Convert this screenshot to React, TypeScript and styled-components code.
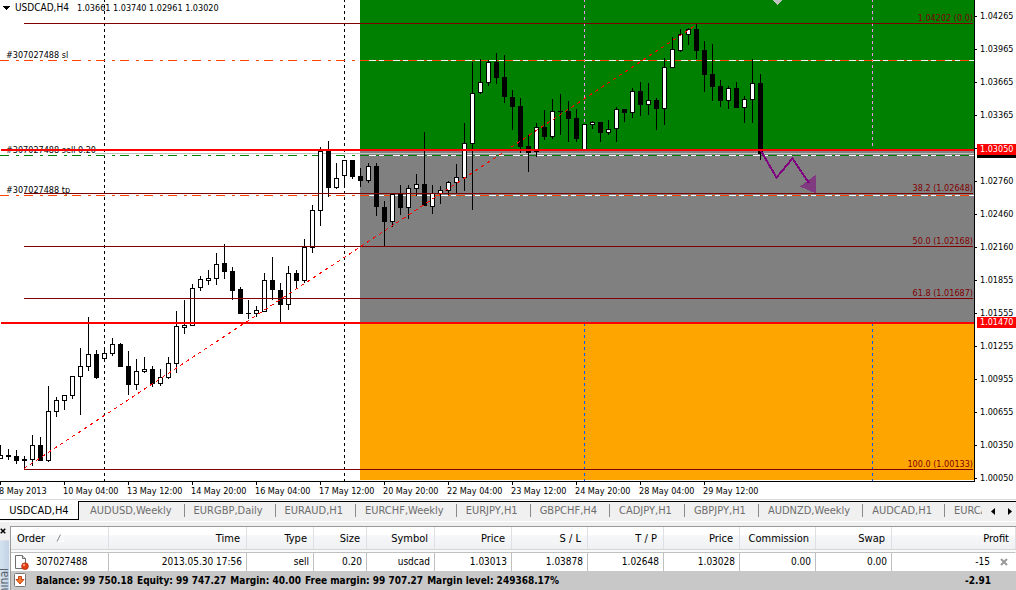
import React from "react";
import styled, { createGlobalStyle } from "styled-components";

const FONT = `"DejaVu Sans Condensed", "DejaVu Sans", "Liberation Sans", sans-serif`;

const GlobalStyle = createGlobalStyle`
  * { box-sizing: border-box; }
  html, body { margin: 0; padding: 0; height: 100%; overflow: hidden; }
  body { background: #f0f0f0; font-family: ${FONT}; color: #000; }
  #root { height: 100%; }
  ul { margin: 0; padding: 0; list-style: none; }
  button { font: inherit; padding: 0; border: 0; background: none; cursor: pointer; }
`;

/* ---------- chart data ---------- */

// [x, wick top, wick bottom, body top, body bottom, rising]
type Candle = [number, number, number, number, number, 0 | 1];

const candles: Candle[] = [
  [0, 445, 459, 455, 459, 1], [8, 449, 460, 455, 457, 0], [16, 450, 464, 456, 461, 0],
  [24, 456, 469, 459, 461, 0], [32, 435, 466, 445, 460, 1], [40, 437, 461, 445, 461, 0],
  [48, 386, 462, 411, 461, 1], [56, 397, 417, 400, 412, 1], [64, 395, 410, 395, 401, 1],
  [72, 376, 399, 376, 396, 1], [80, 348, 415, 366, 377, 1], [88, 317, 371, 354, 367, 1],
  [96, 350, 379, 354, 378, 0], [104, 349, 359, 353, 359, 1], [112, 338, 356, 344, 354, 1],
  [120, 343, 367, 344, 367, 0], [128, 351, 395, 366, 385, 0], [136, 359, 390, 371, 385, 1],
  [144, 357, 373, 369, 372, 1], [152, 366, 387, 369, 384, 0], [160, 369, 386, 377, 384, 1],
  [168, 357, 379, 363, 378, 1], [176, 311, 373, 326, 364, 1], [184, 300, 334, 325, 328, 1],
  [192, 284, 326, 288, 326, 1], [200, 276, 291, 279, 288, 1], [208, 270, 285, 278, 281, 1],
  [216, 253, 285, 264, 279, 1], [224, 244, 279, 263, 272, 0], [232, 267, 300, 271, 291, 0],
  [240, 287, 314, 289, 314, 0], [248, 300, 319, 313, 314, 0], [256, 306, 317, 310, 314, 1],
  [264, 273, 312, 280, 312, 1], [272, 257, 300, 280, 290, 0], [280, 283, 323, 290, 305, 0],
  [288, 266, 310, 273, 305, 1], [296, 270, 289, 273, 281, 0], [304, 239, 283, 247, 281, 1],
  [312, 205, 253, 210, 248, 1], [320, 147, 226, 151, 211, 1], [328, 141, 197, 150, 188, 0],
  [336, 163, 189, 178, 188, 1], [344, 160, 186, 160, 176, 1], [352, 160, 179, 160, 177, 0],
  [360, 168, 187, 176, 181, 0], [368, 163, 183, 166, 181, 1], [376, 163, 216, 166, 207, 0],
  [384, 201, 246, 207, 222, 0], [392, 194, 227, 194, 222, 1], [400, 185, 215, 194, 208, 0],
  [408, 185, 219, 188, 208, 1], [416, 174, 196, 184, 189, 1], [424, 132, 206, 184, 206, 0],
  [432, 185, 214, 193, 207, 1], [440, 186, 204, 190, 194, 1], [448, 181, 195, 182, 191, 1],
  [456, 164, 193, 177, 183, 1], [464, 123, 191, 143, 178, 1], [472, 62, 210, 93, 144, 1],
  [480, 59, 94, 82, 93, 1], [488, 60, 86, 62, 83, 1], [496, 53, 84, 62, 78, 0],
  [504, 55, 103, 77, 97, 0], [512, 90, 130, 97, 107, 0], [520, 98, 153, 106, 147, 0],
  [528, 135, 172, 146, 153, 0], [536, 123, 157, 127, 152, 1], [544, 110, 140, 127, 137, 0],
  [552, 99, 139, 111, 137, 1], [560, 94, 135, 111, 112, 0], [568, 101, 142, 111, 119, 0],
  [576, 109, 142, 118, 139, 0], [584, 124, 150, 124, 150, 1], [592, 121, 129, 122, 125, 1],
  [600, 122, 142, 122, 133, 0], [608, 120, 135, 129, 133, 1], [616, 107, 142, 109, 129, 1],
  [624, 109, 122, 109, 113, 0], [632, 88, 118, 91, 113, 1], [640, 82, 116, 91, 105, 0],
  [648, 83, 115, 100, 105, 1], [656, 98, 130, 100, 109, 0], [664, 58, 125, 67, 109, 1],
  [672, 37, 68, 49, 68, 1], [680, 29, 52, 34, 51, 1], [688, 28, 45, 29, 35, 1],
  [696, 24, 59, 29, 51, 0], [704, 41, 92, 50, 75, 0], [712, 44, 101, 74, 87, 0],
  [720, 80, 107, 86, 101, 0], [728, 86, 109, 88, 101, 1], [736, 82, 108, 88, 108, 0],
  [744, 96, 123, 99, 108, 1], [752, 59, 123, 83, 100, 1], [760, 74, 160, 83, 154, 0],
];

const fibs = [
  { y: 23, label: "1.04202 (0.0)" },
  { y: 193, label: "38.2 (1.02648)" },
  { y: 246, label: "50.0 (1.02168)" },
  { y: 298, label: "61.8 (1.01687)" },
  { y: 469, label: "100.0 (1.00133)" },
];

const orders = [
  { y: 60, color: "#ff4500", label: "#307027488 sl", base: 58 },
  { y: 155, color: "#008000", label: "#307027488 sell 0.20", base: 153 },
  { y: 195, color: "#ff4500", label: "#307027488 tp", base: 193 },
];

const prices = [
  "1.04265", "1.03965", "1.03665", "1.03365", "", "1.02760", "1.02460", "1.02160",
  "1.01855", "1.01555", "1.01255", "1.00955", "1.00655", "1.00350", "1.00050",
];

const dates = [
  "8 May 2013", "10 May 04:00", "13 May 12:00", "14 May 20:00", "16 May 04:00", "17 May 12:00",
  "20 May 20:00", "22 May 04:00", "23 May 12:00", "24 May 20:00", "28 May 04:00", "29 May 12:00",
];

const tabs = [
  "USDCAD,H4", "AUDUSD,Weekly", "EURGBP,Daily", "EURAUD,H1", "EURCHF,Weekly", "EURJPY,H1",
  "GBPCHF,H4", "CADJPY,H1", "GBPJPY,H1", "AUDNZD,Weekly", "AUDCAD,H1", "EURCAD,H1",
];

const columns: { name: string; width?: number; value: string }[] = [
  { name: "Order", width: 98, value: "307027488" },
  { name: "Time", width: 138, value: "2013.05.30 17:56" },
  { name: "Type", width: 67, value: "sell" },
  { name: "Size", width: 53, value: "0.20" },
  { name: "Symbol", width: 68, value: "usdcad" },
  { name: "Price", width: 77, value: "1.03013" },
  { name: "S / L", width: 76, value: "1.03878" },
  { name: "T / P", width: 76, value: "1.02648" },
  { name: "Price", width: 76, value: "1.03028" },
  { name: "Commission", width: 76, value: "0.00" },
  { name: "Swap", width: 76, value: "0.00" },
  { name: "Profit", value: "-15" },
];

/* ---------- styles ---------- */

const Window = styled.main`
  display: flex;
  flex-direction: column;
  height: 100%;
`;

const ChartPanel = styled.section`
  display: grid;
  grid-template-columns: minmax(0, 1fr) 41px;
  background: #fff;
  border-bottom: 1px solid #d9d9d9;
`;

const Plot = styled.div`
  border-right: 1px solid #000;
  border-bottom: 1px solid #000;
`;

const PlotSvg = styled.svg`
  display: block;
  width: 100%;
  height: 481px;
  font-family: ${FONT};
  font-size: 9px;
`;

const SymbolTitle = styled.text`
  font-size: 10px;
`;

const PriceAxis = styled.ul`
  position: relative;
  font-size: 9px;
  line-height: 33px;
  height: 482px;
  overflow: hidden;
`;

const PriceTick = styled.li`
  display: flex;
  align-items: center;
  gap: 3px;
  height: 33px;
  &:last-child { height: 32px; }
  &::before {
    content: "";
    width: 2px;
    height: 1px;
    background: #000;
  }
`;

const PriceBadge = styled.li<{ $top: number; $color: string }>`
  position: absolute;
  top: ${(p) => p.$top}px;
  left: 2px;
  right: 0;
  height: 11px;
  padding-left: 3px;
  line-height: 11px;
  color: #fff;
  background: ${(p) => p.$color};
`;

const DateAxis = styled.ul`
  grid-column: 1 / -1;
  display: flex;
  height: 17px;
  overflow: hidden;
`;

const DateTick = styled.li`
  flex: 0 0 64px;
  font-size: 9px;
  line-height: 12px;
  white-space: nowrap;
  &::before {
    content: "";
    display: block;
    width: 1px;
    height: 3px;
    background: #000;
  }
`;

const DateLabel = styled.span`
  margin-left: -1px;
`;

const TabBar = styled.nav`
  display: flex;
  height: 20px;
  margin-top: 1px;
  font-size: 11px;
  color: #6d6d6d;
  background: #f0f0f0;
  box-shadow: 0 -1px 0 #fff;
`;

const TabList = styled.div`
  flex: 1;
  display: flex;
  min-width: 0;
  overflow: hidden;
`;

const ActiveTab = styled.button`
  flex: 0 0 79px;
  height: 19px;
  color: #000;
  background: #fff;
  border: solid #000;
  border-width: 0 1px 1px 0;
`;

const TabStrip = styled.div`
  display: flex;
  flex: 1;
  min-width: 0;
  overflow: hidden;
  padding-left: 2px;
  border-top: 1px solid #000;
`;

const Tab = styled.button`
  flex: none;
  display: flex;
  align-items: center;
  height: 17px;
  padding-left: 9px;
  color: inherit;
  &::after {
    content: "";
    width: 1px;
    height: 13px;
    margin-left: 12px;
    background: #8a8a8a;
  }
`;

const TabArrows = styled.div`
  display: flex;
  flex: 0 0 34px;
  justify-content: space-between;
  align-items: center;
  padding: 0 4px 0 9px;
  border-top: 1px solid #000;
`;

const ArrowButton = styled.button`
  display: flex;
`;

const Terminal = styled.section`
  display: flex;
  flex: 1;
  min-height: 0;
  padding-top: 4px;
  border-top: 1px solid #fff;
`;

const SideBar = styled.aside`
  display: flex;
  flex-direction: column;
  flex: 0 0 10px;
  overflow: hidden;
`;

const CloseButton = styled.button`
  display: flex;
  flex: 0 0 14px;
  padding-top: 2px;
`;

const SideTitle = styled.h2`
  flex: 1;
  width: 9px;
  margin: 0;
  padding-bottom: 28px;
  writing-mode: vertical-rl;
  transform: rotate(180deg);
  font-size: 12px;
  font-weight: 400;
  line-height: 9px;
  white-space: nowrap;
  color: #5a626c;
  background: linear-gradient(90deg, #c2d3e4, #d4e2f0);
`;

const TradePane = styled.div`
  flex: 1;
  min-width: 0;
  display: flex;
  flex-direction: column;
  border-top: 1px solid #9a9a9a;
  border-left: 1px solid #9a9a9a;
`;

const TradeTable = styled.table`
  width: 100%;
  table-layout: fixed;
  border-collapse: separate;
  border-spacing: 0;
  background: #fff;
`;

const HeadCell = styled.th<{ $left?: boolean }>`
  height: 23px;
  padding: 1px 6px 0;
  font-size: 11px;
  font-weight: 400;
  line-height: 20px;
  text-align: ${(p) => (p.$left ? "left" : "right")};
  white-space: nowrap;
  background: linear-gradient(#fff 0 35%, #f6f7f9 40%, #f0f1f3);
  border-right: 1px solid #dfe0e4;
  border-bottom: 1px solid #d5d5d5;
`;

const SortMark = styled.svg`
  margin-left: 11px;
`;

const DataCell = styled.td<{ $left?: boolean }>`
  height: 19px;
  padding: 0 4px 1px;
  font-size: 10px;
  line-height: 17px;
  text-align: ${(p) => (p.$left ? "left" : "right")};
  white-space: nowrap;
  border-top: 1px solid #c0c0c0;
  border-right: 1px solid #c0c0c0;
  &:last-child { border-right-color: #fff; }
`;

const HeadGap = styled.td`
  height: 2px;
  padding: 0;
  background: #fafafa;
`;

const IconText = styled.span`
  display: flex;
  align-items: center;
  gap: 6px;
`;

const ProfitText = styled.span`
  display: flex;
  justify-content: flex-end;
  align-items: center;
  gap: 10px;
  padding-right: 3px;
`;

const Summary = styled.footer`
  flex: 1;
  display: flex;
  align-items: center;
  gap: 4px;
  padding: 0 25px 0 3px;
  font-size: 10px;
  font-weight: 700;
  white-space: nowrap;
  background: #c8c8c8;
`;

const SummaryIcon = styled.svg`
  margin-right: 5px;
`;

const SummaryTotal = styled.span`
  margin-left: auto;
`;

/* ---------- parts ---------- */

function PriceChart() {
  return (
    <PlotSvg shapeRendering="crispEdges" role="img" aria-label="USDCAD H4 candlestick chart">
      <rect x="360" y="0" width="100%" height="150" fill="#008000" />
      <rect x="360" y="150" width="100%" height="173" fill="#808080" />
      <rect x="360" y="323" width="100%" height="157" fill="#ffa500" />
      {[104, 344].map((x) => (
        <path key={x} d={`M${x + 0.5} -1V481`} stroke="#000" strokeDasharray="3 3" />
      ))}
      {[584, 872].map((x) => (
        <g key={x} strokeDasharray="3 3">
          <path d={`M${x + 0.5} -1V147`} stroke="#f28cf2" />
          <path d={`M${x + 0.5} 323V481`} stroke="#005aff" />
        </g>
      ))}
      <rect x="95" y="153" width="100%" height="1" fill="#c0c0c0" />
      {orders.map((o) => (
        <g key={o.y}>
          <rect x="360" y={o.y} width="100%" height="1" fill="#fff" />
          <line x1="0" x2="100%" y1={o.y + 0.5} y2={o.y + 0.5} stroke={o.color} strokeDasharray="9 7 3 5" />
          <text x="6" y={o.base}>{o.label}</text>
        </g>
      ))}
      {candles.map(([x, high, low, top, bottom, up]) => (
        <g key={x}>
          <rect x={x} y={high} width="1" height={low - high} />
          <rect x={x - 2} y={top} width="5" height={bottom - top} />
          {up === 1 && <rect x={x - 1} y={top + 1} width="3" height={bottom - top - 2} fill="#fff" />}
        </g>
      ))}
      {fibs.map((f) => (
        <svg key={f.y} x="-1" width="100%" overflow="visible">
          <line x1="25" x2="100%" y1={f.y + 0.5} y2={f.y + 0.5} stroke="#800000" />
          <text x="100%" y={f.y - 2} textAnchor="end" fill="#800000">{f.label}</text>
        </svg>
      ))}
      <path d="M24 468.500L360 247L696 25" fill="none" stroke="#f00" strokeDasharray="3.6 3.6" />
      <rect x="1" y="149" width="100%" height="2" fill="#f00" />
      <rect x="1" y="322" width="100%" height="2" fill="#f00" />
      <path d="M800 186.500L816 174.500V193.500Z" fill="#7f3a80" />
      <path d="M761 151L776.500 177.500L792.500 158.500L809 183" fill="none" stroke="#800080" strokeWidth="2" />
      <path d="M772 0H783L777.500 5Z" fill="#c0c0c0" />
      <path d="M3 6H10L6.500 10Z" />
      <SymbolTitle x="15" y="11">USDCAD,H4</SymbolTitle>
      <text x="77" y="11">1.03661 1.03740 1.02961 1.03020</text>
    </PlotSvg>
  );
}

function OrderIcon() {
  return (
    <svg width="15" height="16" viewBox="0 0 15 16">
      <path d="M.5 1.500H7.500L10.500 4.500V14.500H.5Z" fill="#fff" stroke="#6e6e6e" />
      <path d="M7.500 1.500V4.500H10.500" fill="#ddd" stroke="#6e6e6e" />
      <circle cx="10" cy="12.200" r="3.400" fill="#e23c12" stroke="#a82a0c" strokeWidth=".6" />
      <circle cx="9" cy="11" r="1.200" fill="#ff9a78" />
    </svg>
  );
}

function BalanceIcon() {
  return (
    <SummaryIcon width="13" height="15" viewBox="0 0 13 15">
      <rect x=".5" y=".5" width="11" height="13" rx="1" fill="#fff" stroke="#777" />
      <path d="M4.500 3.500H7.500V6.500H10L6 11L2 6.500H4.500Z" fill="#f47a2c" stroke="#c0340c" strokeWidth=".9" />
    </SummaryIcon>
  );
}

function Cross({ size, color }: { size: number; color: string }) {
  return (
    <svg width={size} height={size} viewBox="0 0 8 8">
      <path d="M1 1L7 7M7 1L1 7" stroke={color} strokeWidth="2" />
    </svg>
  );
}

export default function App() {
  return (
    <Window>
      <GlobalStyle />
      <ChartPanel>
        <Plot>
          <PriceChart />
        </Plot>
        <PriceAxis>
          {prices.map((p, i) => (
            <PriceTick key={i}>{p}</PriceTick>
          ))}
          <PriceBadge $top={147} $color="#000" />
          <PriceBadge $top={144} $color="#f00">1.03050</PriceBadge>
          <PriceBadge $top={317} $color="#f00">1.01470</PriceBadge>
        </PriceAxis>
        <DateAxis>
          {dates.map((d) => (
            <DateTick key={d}>
              <DateLabel>{d}</DateLabel>
            </DateTick>
          ))}
        </DateAxis>
      </ChartPanel>

      <TabBar>
        <TabList>
          <ActiveTab>{tabs[0]}</ActiveTab>
          <TabStrip>
            {tabs.slice(1).map((t) => (
              <Tab key={t}>{t}</Tab>
            ))}
          </TabStrip>
        </TabList>
        <TabArrows>
          <ArrowButton aria-label="Previous tabs">
            <svg width="4" height="7"><path d="M4 0V7L0 3.500Z" /></svg>
          </ArrowButton>
          <ArrowButton aria-label="Next tabs">
            <svg width="4" height="7"><path d="M0 0V7L4 3.500Z" /></svg>
          </ArrowButton>
        </TabArrows>
      </TabBar>

      <Terminal>
        <SideBar>
          <CloseButton aria-label="Close terminal">
            <Cross size={6} color="#000" />
          </CloseButton>
          <SideTitle>Terminal</SideTitle>
        </SideBar>
        <TradePane>
          <TradeTable>
            <colgroup>
              {columns.map((c, i) => (
                <col key={i} width={c.width} />
              ))}
            </colgroup>
            <thead>
              <tr>
                {columns.map((c, i) => (
                  <HeadCell key={i} scope="col" $left={i === 0}>
                    {c.name}
                    {i === 0 && (
                      <SortMark width="9" height="8" viewBox="0 0 9 8" fill="none">
                        <path d="M4.500 .5L8 7.500H1" stroke="#fff" />
                        <path d="M1 7.500L4.500 .5" stroke="#8a8a8a" />
                      </SortMark>
                    )}
                  </HeadCell>
                ))}
              </tr>
            </thead>
            <tbody>
              <tr>
                <HeadGap colSpan={columns.length} />
              </tr>
              <tr>
                {columns.map((c, i) => (
                  <DataCell key={i} $left={i === 0}>
                    {i === 0 ? (
                      <IconText>
                        <OrderIcon />
                        {c.value}
                      </IconText>
                    ) : i === columns.length - 1 ? (
                      <ProfitText>
                        {c.value}
                        <ArrowButton aria-label="Close order">
                          <Cross size={8} color="#9a9a9a" />
                        </ArrowButton>
                      </ProfitText>
                    ) : (
                      c.value
                    )}
                  </DataCell>
                ))}
              </tr>
            </tbody>
          </TradeTable>
          <Summary>
            <BalanceIcon />
            <span>Balance: 99 750.18</span>
            <span>Equity: 99 747.27</span>
            <span>Margin: 40.00</span>
            <span>Free margin: 99 707.27</span>
            <span>Margin level: 249368.17%</span>
            <SummaryTotal>-2.91</SummaryTotal>
          </Summary>
        </TradePane>
      </Terminal>
    </Window>
  );
}
